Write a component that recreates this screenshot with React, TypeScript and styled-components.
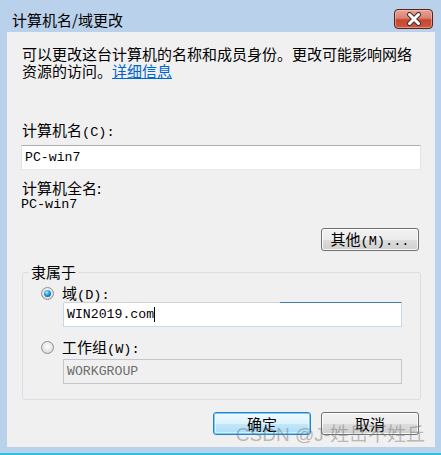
import styled, { createGlobalStyle } from "styled-components";

const GlobalStyle = createGlobalStyle`
  body {
    margin: 0;
    background: #b9d1ea;
    font-family: "Noto Sans CJK SC", "Liberation Sans", sans-serif;
  }
`;

const cjk = `"Noto Sans CJK SC", "Liberation Sans", sans-serif`;

const App = () => {
  return (
    <>
      <GlobalStyle />
      <Window>
        <TitleBar>
          <Title>计算机名/域更改</Title>
          <CloseButton aria-label="关闭">
            <svg width="16" height="14" viewBox="0 0 16 14">
              <path
                d="M3.5 2.5 L12.5 11.5 M12.5 2.5 L3.5 11.5"
                stroke="#4a3030"
                strokeWidth="5"
                strokeLinecap="round"
                fill="none"
              />
              <path
                d="M3.5 2.5 L12.5 11.5 M12.5 2.5 L3.5 11.5"
                stroke="#ffffff"
                strokeWidth="3"
                strokeLinecap="round"
                fill="none"
              />
            </svg>
          </CloseButton>
        </TitleBar>

        <Client>
          <Intro>
            可以更改这台计算机的名称和成员身份。更改可能影响网络资源的访问。
            <Link href="#">详细信息</Link>
          </Intro>

          <Label $top={42}>
            计算机名<Latin>(C):</Latin>
          </Label>
          <TextBox $top={4} $wide>
            <FieldText>PC-win7</FieldText>
          </TextBox>

          <Label $top={9}>计算机全名:</Label>
          <Value>PC-win7</Value>

          <ButtonRow $top={15}>
            <Button>
              其他<Latin>(M)...</Latin>
            </Button>
          </ButtonRow>

          <Group>
            <Legend>隶属于</Legend>
            <RadioRow>
              <Radio $checked />
              <span>
                域<Latin>(D):</Latin>
              </span>
            </RadioRow>
            <TextBox $focused>
              <FieldText>WIN2019.com</FieldText>
              <Caret />
            </TextBox>

            <RadioRow $top={12}>
              <Radio />
              <span>
                工作组<Latin>(W):</Latin>
              </span>
            </RadioRow>
            <TextBox $top={3} $disabled>
              <FieldText>WORKGROUP</FieldText>
            </TextBox>
          </Group>

          <ButtonRow $top={12}>
            <Button $default>确定</Button>
            <Button>取消</Button>
          </ButtonRow>
        </Client>

        <Watermark>CSDN @J-姓岳不姓丘</Watermark>
      </Window>
    </>
  );
};

const Window = styled.div`
  position: relative;
  width: 441px;
  height: 455px;
  box-sizing: border-box;
  background: #b9d1ea;
  border-bottom: 2px solid #2bc3e3;
  display: flex;
  flex-direction: column;
  overflow: hidden;
`;

const TitleBar = styled.div`
  height: 32px;
  display: flex;
  justify-content: space-between;
  align-items: flex-start;
  padding: 0 8px 0 12px;
`;

const Title = styled.div`
  margin-top: 10px;
  font-family: ${cjk};
  font-size: 15px;
  line-height: 20px;
  color: #000;
`;

const CloseButton = styled.button`
  margin-top: 9px;
  width: 39px;
  height: 20px;
  padding: 0;
  box-sizing: border-box;
  display: flex;
  align-items: center;
  justify-content: center;
  border: 1px solid #5a1f1a;
  border-radius: 4px;
  background: linear-gradient(#e7a396 0%, #d98272 45%, #c5472f 55%, #cb5a40 100%);
  box-shadow: inset 0 0 0 1px rgba(255, 220, 210, 0.45);
`;

const Client = styled.div`
  margin: 0 6px 0 7px;
  height: 415px;
  box-sizing: border-box;
  background: #f0f0f0;
  padding: 13px 14px 0 14px;
  display: flex;
  flex-direction: column;
  font-family: ${cjk};
  font-size: 15px;
  color: #000;
`;

const Intro = styled.p`
  margin: 0 0 0 1px;
  width: 400px;
  line-height: 17px;
`;

const Link = styled.a`
  color: #0066cc;
  text-decoration: underline;
`;

const Latin = styled.span`
  font-family: "Liberation Mono", monospace;
  font-size: 13.6px;
`;

const Label = styled.div<{ $top?: number }>`
  margin: ${(p) => p.$top ?? 0}px 0 0 1px;
  line-height: 17px;
`;

const Value = styled.div`
  font-family: "Liberation Mono", monospace;
  font-size: 13.4px;
  line-height: 17px;
`;

const TextBox = styled.div<{
  $top?: number;
  $wide?: boolean;
  $focused?: boolean;
  $disabled?: boolean;
}>`
  margin: ${(p) => p.$top ?? 0}px 0 0 ${(p) => (p.$wide ? 0 : 22)}px;
  width: ${(p) => (p.$wide ? 400 : 339)}px;
  height: 25px;
  box-sizing: border-box;
  display: flex;
  align-items: center;
  padding: 0 2px;
  border: 1px solid #e2e3ea;
  border-top-color: #abadb3;
  border-bottom-color: #e3e9ef;
  background: #fff;
  color: #000;

  ${(p) =>
    p.$focused &&
    `
    border-top-color: transparent;
    border-left-color: #c5d9ec;
    border-right-color: #c5d9ec;
    border-bottom-color: #c5dcee;
    background:
      linear-gradient(to right, #cfd3d9 64%, #3f7db8 64%) top / 100% 1px no-repeat border-box,
      #fff;
  `}

  ${(p) =>
    p.$disabled &&
    `
    background: #f0f0f0;
    border-color: #c4c6c9;
    color: #6d6d6d;
  `}
`;

const FieldText = styled.span`
  font-family: "Liberation Mono", monospace;
  font-size: 13.2px;
  line-height: 17px;
  padding-left: 1px;
`;

const Caret = styled.span`
  width: 1px;
  height: 15px;
  background: #000;
`;

const ButtonRow = styled.div<{ $top?: number }>`
  margin: ${(p) => p.$top ?? 0}px 2px 0 0;
  display: flex;
  justify-content: flex-end;
  gap: 10px;
`;

const Button = styled.button<{ $default?: boolean }>`
  width: 98px;
  height: 23px;
  box-sizing: border-box;
  padding: 0;
  font-family: ${cjk};
  font-size: 15px;
  line-height: 17px;
  color: #000;
  border-radius: 3px;
  border: 1px solid ${(p) => (p.$default ? "#2f7fc8" : "#707070")};
  background: ${(p) =>
    p.$default
      ? "linear-gradient(#eff9fe 0%, #def2fc 50%, #c4e7fa 51%, #a9dcf6 100%)"
      : "linear-gradient(#f2f2f2 0%, #ebebeb 50%, #dddddd 51%, #cfcfcf 100%)"};
  box-shadow: ${(p) =>
    p.$default
      ? "inset 0 0 0 1px #6fd0f6, inset 0 0 0 2px rgba(255,255,255,0.5)"
      : "inset 0 0 0 1px rgba(255,255,255,0.85)"};
`;

const Group = styled.div`
  position: relative;
  margin: 21px 0 0 1px;
  width: 399px;
  box-sizing: border-box;
  border: 1px solid #d5dfe5;
  border-radius: 3px;
  padding: 12px 0 15px 18px;
  display: flex;
  flex-direction: column;
`;

const Legend = styled.span`
  position: absolute;
  top: -10px;
  left: 6px;
  padding: 0 2px;
  background: #f0f0f0;
  line-height: 17px;
`;

const RadioRow = styled.div<{ $top?: number }>`
  margin-top: ${(p) => p.$top ?? 0}px;
  height: 17px;
  display: flex;
  align-items: center;
  gap: 8px;
  line-height: 17px;
`;

const Radio = styled.span<{ $checked?: boolean }>`
  position: relative;
  width: 13px;
  height: 13px;
  box-sizing: border-box;
  border-radius: 50%;
  border: 1px solid #8c8f92;
  background: radial-gradient(circle at 50% 40%, #ffffff 0%, #e6e6e6 55%, #c9c9c9 100%);

  &::after {
    content: "";
    display: ${(p) => (p.$checked ? "block" : "none")};
    position: absolute;
    inset: 2px;
    border-radius: 50%;
    background: radial-gradient(circle at 40% 35%, #b8ecff 0%, #2aa3e2 40%, #0d5a9c 80%, #0a3f75 100%);
  }
`;

const Watermark = styled.div`
  position: absolute;
  right: 16px;
  bottom: 7px;
  font-family: "Liberation Sans", "Noto Sans CJK SC", sans-serif;
  font-size: 19px;
  line-height: 22px;
  color: rgba(110, 110, 110, 0.45);
  pointer-events: none;
  white-space: nowrap;
`;

export default App;
